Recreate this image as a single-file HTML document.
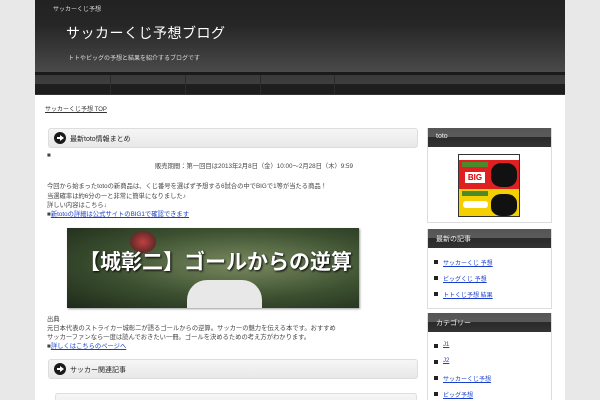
<!DOCTYPE html>
<html><head><meta charset="utf-8"><style>
*{margin:0;padding:0;box-sizing:border-box}
html,body{width:600px;height:400px;overflow:hidden}
body{background:#e8e8e8;font-family:"Liberation Sans","Noto Sans CJK JP",sans-serif;font-size:7px;color:#333;position:relative}
#page{position:absolute;left:35px;top:0;width:530px;height:400px;background:#fff;overflow:hidden}
#hd{position:absolute;left:0;top:0;width:530px;height:72px;background:linear-gradient(#222 0,#262626 25px,#4a4a4a 72px)}
#hd .s{position:absolute;left:18px;top:4px;color:#ddd;font-size:6px}
#hd h1{position:absolute;left:31px;top:23px;color:#fff;font-size:14px;font-weight:normal;letter-spacing:0.5px}
#hd .d{position:absolute;left:33px;top:53px;color:#ddd;font-size:6px}
#nv{position:absolute;left:0;top:72px;width:530px;height:23px;background:linear-gradient(#1a1a1a 0,#1a1a1a 3px,#3a3a3a 3px,#3e3e3e 12px,#1f1f1f 12px,#1c1c1c 22px,#333 22px)}
#nv i{position:absolute;top:3px;width:1px;height:19px;background:#2a2a2a}
.bc{position:absolute;left:10px;top:104px;font-size:6px;text-decoration:underline;color:#333}
.bar{position:absolute;height:20px;background:linear-gradient(#f6f6f6,#e8e8e8);border:1px solid #ddd;border-radius:3px}
.bar .ic{position:absolute;left:5px;top:3px;width:12px;height:12px;border-radius:50%;background:#1a1a1a}
.bar .ic:after{content:"";position:absolute;left:3px;top:5px;width:4px;height:2px;background:#fff}
.bar .ic:before{content:"";position:absolute;left:6px;top:3px;border-left:4px solid #fff;border-top:3px solid transparent;border-bottom:3px solid transparent}
.bar span{position:absolute;left:21px;top:5px;font-size:7px;color:#222}
.t{position:absolute;font-size:6.3px;color:#444;white-space:nowrap}
a{color:#1a3fcc;text-decoration:underline}
.side{position:absolute;left:392px;width:125px;border:1px solid #ddd;border-top:none}
.sh{height:19px;background:linear-gradient(#555 0,#5a5a5a 9px,#2a2a2a 9px,#333 19px);color:#eee;font-size:7px;padding:5px 8px}
.li{position:relative;height:16px;padding-left:15px;font-size:6px;padding-top:4px}
.li:before{content:"";position:absolute;left:6px;top:6px;width:4px;height:4px;background:#222}
</style></head><body>
<div id="page">
<div id="hd"><div class="s">サッカーくじ予想</div><h1>サッカーくじ予想ブログ</h1><div class="d">トトやビッグの予想と結果を紹介するブログです</div></div>
<div id="nv"><i style="left:75px"></i><i style="left:150px"></i><i style="left:225px"></i><i style="left:299px"></i></div>
<div class="bc">サッカーくじ予想 TOP</div>

<div class="bar" style="left:13px;top:128px;width:370px"><div class="ic"></div><span>最新toto情報まとめ</span></div>
<div class="t" style="left:12px;top:152px">■</div>
<div class="t" style="left:120px;top:161px">販売期間：第一回目は2013年2月8日（金）10:00～2月28日（木）9:59</div>
<div class="t" style="left:12px;top:181px">今回から始まったtotoの新商品は、くじ番号を選ばず予想する6試合の中でBIGで1等が当たる商品！</div>
<div class="t" style="left:12px;top:191px">当選確率は約6分の一と非常に簡単になりました♪</div>
<div class="t" style="left:12px;top:200px">詳しい内容はこちら↓</div>
<div class="t" style="left:12px;top:209px">■<a>新totoの詳細は公式サイトのBIG1で確認できます</a></div>
<div style="position:absolute;left:32px;top:228px;width:292px;height:80px;background:radial-gradient(ellipse at 60% 45%,#7a8a60,#3c5030 55%,#1e2a1a);box-shadow:1px 1px 2px #999;overflow:hidden">
<div style="position:absolute;left:63px;top:3px;width:26px;height:22px;border-radius:50%;background:radial-gradient(#c04040,#3a2020)"></div>
<div style="position:absolute;left:120px;top:52px;width:75px;height:30px;background:#e8e8e8;border-radius:20px 20px 0 0"></div>
<div style="position:absolute;left:12px;top:18px;color:#fff;font-size:21px;font-weight:bold;white-space:nowrap;text-shadow:1px 1px 2px #000">【城彰二】ゴールからの逆算</div></div>
<div class="t" style="left:12px;top:314px">出典</div>
<div class="t" style="left:12px;top:323px">元日本代表のストライカー城彰二が語るゴールからの逆算。サッカーの魅力を伝える本です。おすすめ</div>
<div class="t" style="left:12px;top:332px">サッカーファンなら一度は読んでおきたい一冊。ゴールを決めるための考え方がわかります。</div>
<div class="t" style="left:12px;top:341px">■<a>詳しくはこちらのページへ</a></div>
<div class="bar" style="left:13px;top:359px;width:370px"><div class="ic"></div><span>サッカー関連記事</span></div>
<div class="bar" style="left:20px;top:393px;width:362px;height:20px"></div>

<div class="side" style="top:128px;height:95px"><div class="sh">toto</div>
<div style="position:absolute;left:30px;top:26px;width:62px;height:63px;border:1px solid #333;background:linear-gradient(#fff 0,#fff 5px,#e02020 5px,#e02020 34px,#f5d000 34px)">
<div style="position:absolute;left:3px;top:7px;width:26px;height:5px;background:#4a8a2a"></div>
<div style="position:absolute;left:3px;top:36px;width:26px;height:5px;background:#4a8a2a"></div>
<div style="position:absolute;right:2px;top:8px;width:26px;height:24px;background:#111;border-radius:40%"></div>
<div style="position:absolute;right:2px;top:39px;width:26px;height:22px;background:#111;border-radius:40%"></div>
<div style="position:absolute;left:6px;top:17px;width:20px;height:11px;background:#fff;color:#d00;font-size:8px;font-weight:bold;text-align:center;line-height:11px">BIG</div>
<div style="position:absolute;left:4px;top:46px;width:25px;height:7px;background:#fff;border-radius:3px"></div></div></div>
<div class="side" style="top:229px;height:80px"><div class="sh">最新の記事</div>
<div style="padding-top:6px"><div class="li"><a>サッカーくじ 予想</a></div><div class="li"><a>ビッグくじ 予想</a></div><div class="li"><a>トトくじ予想 結果</a></div></div></div>
<div class="side" style="top:313px;height:90px"><div class="sh">カテゴリー</div>
<div style="padding-top:6px"><div class="li"><a>J1</a></div><div class="li"><a>J2</a></div><div class="li"><a>サッカーくじ予想</a></div><div class="li"><a>ビッグ予想</a></div></div></div>
</div>
</body></html>
